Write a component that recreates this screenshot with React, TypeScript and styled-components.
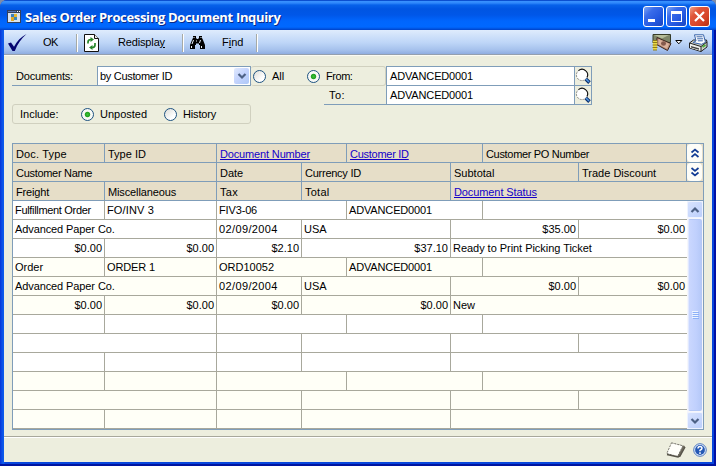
import React from "react";
import styled, { createGlobalStyle, css } from "styled-components";

const GlobalStyle = createGlobalStyle`
  * { box-sizing: border-box; }
  body { margin: 0; background: #7f8da8; }
  svg { display: block; flex: none; }
`;

const line = "#7f9db9";
const face = "#edeede";

const Window = styled.div`
  width: 716px;
  height: 466px;
  display: flex;
  flex-direction: column;
  overflow: hidden;
  border-radius: 7px 7px 0 0;
  background: #0846dc;
  font: 11px/13px "Liberation Sans", Arial, sans-serif;
  color: #000;
  white-space: nowrap;
`;

const TitleBar = styled.header`
  height: 30px;
  flex: none;
  display: flex;
  align-items: center;
  padding: 3px 6px 0 7px;
  background: linear-gradient(
    #0b4fd0 0, #0b4fd0 1px, #3a93ff 1px, #2f88fb 3px, #0762ea 5px, #0055e2 9px,
    #0057e8 15px, #0066fd 21px, #0068ff 27px, #0050dc 29px, #0040c4 30px
  );
`;

const Title = styled.h1`
  margin: 0 auto 0 4px;
  font: bold 13px/18px "Open Sans", sans-serif;
  letter-spacing: -0.33px;
  color: #fff;
  text-shadow: 1px 1px 0 #0a2a86;
`;

const CaptionButton = styled.button<{ $close?: boolean }>`
  width: 21px;
  height: 21px;
  margin: 0 0 0 2px;
  padding: 0;
  border: 1px solid #fff;
  border-radius: 3px;
  background: ${(p) =>
    p.$close
      ? "linear-gradient(135deg, #f0a088 0, #e0563a 30%, #d8452a 65%, #b83010 100%)"
      : "linear-gradient(135deg, #7ea6f4 0, #3a6cea 30%, #2458e0 65%, #1a44c0 100%)"};
`;

const Frame = styled.div`
  flex: 1;
  min-height: 0;
  display: flex;
  flex-direction: column;
  padding: 0 0 0 4px;
  border-right: 2px solid #0010a4;
  border-bottom: 2px solid #0014a0;
  background: linear-gradient(90deg, #0734d8 0, #0c50e6 2px, #0d5eee 4px, #0846dc 5px);
`;

const Client = styled.main`
  flex: 1;
  min-height: 0;
  margin: 0 2px 2px 0;
  display: flex;
  flex-direction: column;
  background: ${face};
`;

const Toolbar = styled.div`
  height: 26px;
  flex: none;
  display: flex;
  align-items: center;
  padding: 0 4px 1px 4px;
  background: linear-gradient(#dfecfd 0, #cfe1fa 6px, #bdd5f7 13px, #a5c1ec 20px, #8fade0 24px, #8c9ab0 24px, #9da5ac 25px, #fbfbf4 25px);
`;

const Tool = styled.button<{ $width: number; $gap: number; $ls?: number }>`
  width: ${(p) => p.$width}px;
  height: 22px;
  padding: 0;
  border: 0;
  background: none;
  display: flex;
  align-items: center;
  gap: ${(p) => p.$gap}px;
  font: inherit;
  letter-spacing: ${(p) => p.$ls ?? 0}px;
  color: #000;
`;

const Divider = styled.i`
  width: 2px;
  height: 18px;
  margin-right: 6px;
  border-left: 1px solid #a6aaa6;
  border-right: 1px solid #fff;
`;

const ToolEnd = styled.div`
  margin-left: auto;
  display: flex;
  align-items: center;
`;

const Form = styled.section`
  display: flex;
  align-items: flex-start;
  margin: 10px 0 0 8px;
  height: 77px;
`;

const LeftForm = styled.div`
  width: 239px;
`;

const Row = styled.div`
  display: flex;
`;

const Prompt = styled.label<{ $width: number; $height: number; $pad: number; $ls?: number }>`
  width: ${(p) => p.$width}px;
  height: ${(p) => p.$height}px;
  padding: ${(p) => p.$height - 16}px 0 0 ${(p) => p.$pad}px;
  letter-spacing: ${(p) => p.$ls ?? 0}px;
  border-bottom: 1px solid ${line};
`;

const Combo = styled.div`
  flex: 1;
  height: 20px;
  display: flex;
  justify-content: space-between;
  border: 1px solid ${line};
  background: #fff;
  padding: 1px 1px 1px 2px;
  line-height: 17px;
  letter-spacing: -0.31px;
`;

const ComboArrow = styled.span`
  width: 15px;
  height: 16px;
  display: grid;
  place-items: center;
  border-radius: 2px;
  background: linear-gradient(135deg, #e1eafe, #c3d3fd 50%, #aec8f7);
`;

const Group = styled.div<{ $kind: "range" | "include" }>`
  display: flex;
  align-items: center;
  height: 20px;
  border: 1px solid #d0d0bf;
  border-radius: 3px;
  ${(p) =>
    p.$kind === "range"
      ? css`width: 135px; padding-left: 2px; border-left: 0;`
      : css`width: 239px; margin-top: 18px; padding-left: 7px;`}
`;

const Option = styled.label<{ $width: number; $gap: number; $ls?: number }>`
  width: ${(p) => p.$width}px;
  display: flex;
  align-items: center;
  gap: ${(p) => p.$gap}px;
  letter-spacing: ${(p) => p.$ls ?? 0}px;
`;

const Radio = styled.span<{ $on?: boolean }>`
  width: 13px;
  height: 13px;
  border: 1px solid #1d5281;
  border-radius: 50%;
  background: ${(p) =>
    p.$on
      ? "radial-gradient(circle at 5.5px 5.5px, #3fc43c 0, #21a121 2.2px, #f8f9f6 3.2px)"
      : "linear-gradient(135deg, #dcdcd7, #fff 70%)"};
`;

const IncludeText = styled.span`
  width: 61px;
  padding-top: 1px;
`;

const RangeForm = styled.div`
  display: flex;
  flex-direction: column;
  align-items: flex-end;
`;

const LookupFields = styled.div`
  width: 206px;
  border: 1px solid ${line};
`;

const LookupRow = styled.div`
  height: 19px;
  display: flex;
  & + & { height: 18px; }
  &:first-child { border-bottom: 1px solid ${line}; }
`;

const LookupValue = styled.span`
  width: 188px;
  padding: 3px 0 0 3px;
  background: #fff;
  border-right: 1px solid ${line};
  letter-spacing: -0.15px;
`;

const Grid = styled.section`
  width: 692px;
  height: 287px;
  flex: none;
  margin-left: 8px;
  border: 1px solid ${line};
`;

const GridHead = styled.div`
  background: #e6dec8;
`;

const GridBody = styled.div`
  display: flex;
`;

const Records = styled.div`
  width: 674px;
`;

const GridRow = styled.div<{ $head?: boolean; $tint?: boolean }>`
  height: 19px;
  display: flex;
  border-bottom: 1px solid ${(p) => (p.$head ? line : "#a8a89c")};
  background: ${(p) => (p.$head ? "#e6dec8" : p.$tint ? "#fffff7" : "#fff")};
`;

const Cell = styled.span<{ $width: number; $head?: boolean; $right?: boolean; $ls?: number; $last?: boolean }>`
  width: ${(p) => p.$width}px;
  flex: none;
  padding: ${(p) => (p.$head ? "4px 2px 0 3px" : "3px 2px 0 2px")};
  border-right: ${(p) => (p.$last ? 0 : 1)}px solid ${(p) => (p.$head ? line : "#a8a89c")};
  text-align: ${(p) => (p.$right ? "right" : "left")};
  letter-spacing: ${(p) => p.$ls ?? 0}px;
`;

const HeadLink = styled.a`
  color: #1400c8;
  text-decoration: underline;
  text-underline-offset: 1px;
`;

const Expander = styled.span`
  width: 15px;
  display: grid;
  place-items: center;
  border-radius: 4px;
  background: #fdfdf8;
`;

const Scrollbar = styled.div`
  width: 16px;
  display: flex;
  flex-direction: column;
  background: #f6f6fb;
`;

const ScrollEnd = styled.span`
  height: 17px;
  display: grid;
  place-items: center;
  border: 1px solid #eef3ff;
  border-radius: 2px;
  background: linear-gradient(135deg, #d8e3fe, #bccffb);
`;

const Thumb = styled.span`
  flex: 1;
  margin: 1px;
  display: flex;
  align-items: center;
  justify-content: center;
  border: 1px solid #b4c8f6;
  border-left-color: #dfe8ff;
  border-radius: 2px;
  background: linear-gradient(90deg, #cad7fe, #c0d0fd 60%, #b6c9f8);
`;

const StatusBar = styled.footer`
  flex: 1;
  margin-top: 6px;
  display: flex;
  align-items: center;
  justify-content: flex-end;
  gap: 7px;
  padding-right: 5px;
  border-top: 1px solid #a8a89c;
  box-shadow: inset 0 1px #fff;
`;

const Chevron = () => (
  <svg width="10" height="8" viewBox="0 0 10 8"><path d="M1.5 2 5 5.5 8.5 2" fill="none" stroke="#4d6185" strokeWidth="2.2" /></svg>
);
const ChevronUp = () => (
  <svg width="10" height="8" viewBox="0 0 10 8"><path d="M1.5 6 5 2.5 8.5 6" fill="none" stroke="#4d6185" strokeWidth="2.2" /></svg>
);
const DoubleChevron = ({ up }: { up?: boolean }) => (
  <svg width="10" height="10" viewBox="0 0 10 10">
    <path d={up ? "M1.5 4.5 5 1.5 8.5 4.5M1.5 9 5 6 8.5 9" : "M1.5 1 5 4 8.5 1M1.5 5.5 5 8.5 8.5 5.5"} fill="none" stroke="#123c94" strokeWidth="1.7" />
  </svg>
);

const AppIcon = () => (
  <svg width="14" height="13" viewBox="0 0 14 13" shapeRendering="crispEdges">
    <rect width="14" height="13" fill="#34415c" /><rect x="1" y="3" width="12" height="9" fill="#d9e2ee" />
    <path d="M1 1h8v1H1z" fill="#5c78b4" /><path d="M10 1h1v1h-1zM12 1h1v1h-1z" fill="#fff" />
    <path d="M4 4h3v3H4z" fill="#3a80c0" /><path d="M7 4h3v3H7z" fill="#e8b830" /><path d="M4 7h3v4H4z" fill="#e0a828" /><path d="M7 7h3v3H7z" fill="#3c88b8" />
  </svg>
);
const CheckIcon = () => (
  <svg width="19" height="18" viewBox="0 0 19 18"><path d="M0 9.500 3 8.500 6 12.800C9 7 13 3 18.500 0 13 5 9.500 10 6.800 17H4.500Z" fill="#050570" /></svg>
);
const RefreshIcon = () => (
  <svg width="15" height="18" viewBox="0 0 15 18">
    <path d="M.5.5h10l4 4v13H.5z" fill="#fff" stroke="#111" /><path d="M10.500.5v4h4" fill="#e8e8e8" stroke="#111" />
    <path d="M4 9.500V8q0-2.500 3-2.500M11 9v2q0 2.500-3 2.500" fill="none" stroke="#27862a" strokeWidth="1.7" />
    <path d="m6.500 3 3.500 2.500L6.500 8zM8.500 11 5 13.500 8.500 16z" fill="#27862a" />
  </svg>
);
const BinocularsIcon = () => (
  <svg width="15" height="14" viewBox="0 0 15 14">
    <path d="M3 0h3v2l1 1h1l1-1V0h3v2l1 2 2 5v4h-5V9H9V7.500H6V9H5v4H0V9l2-5 1-2z" fill="#000" />
    <path d="M4 1v1M11 1v1M3.500 4 2 8M10.500 4l-1 3M1.500 10v2M11.500 10v2M6.500 4.500v1" stroke="#e8f0fa" fill="none" />
  </svg>
);
const CashIcon = () => (
  <svg width="20" height="18" viewBox="0 0 20 18">
    <path d="M1 .5h17.500v8H1z" fill="#7e8668" stroke="#343b28" /><path d="M2 1h15L10 4.500z" fill="#b5bc98" />
    <path d="m5 3.500 14 6-3.500 7-11-6z" fill="#b68a73" stroke="#3c2620" /><path d="m6.500 5 10.500 4.800-2 5-8.500-4.500z" fill="#dcb29c" />
    <ellipse cx="11.500" cy="9.500" rx="2.500" ry="2.200" fill="#85594c" />
    <path d="M1 7h4v9H1z" fill="#ecd94a" /><path d="M.5 8.500h5M.5 11h5M.5 13.500h5M1 16h4M1 6.500h4" stroke="#8c7c18" />
  </svg>
);
const CaretIcon = () => (
  <svg width="8" height="5" viewBox="0 0 8 5"><path d="M.8.5h6L3.800 3.800z" fill="#fff" stroke="#000" /></svg>
);
const PrinterIcon = () => (
  <svg width="19" height="18" viewBox="0 0 19 18">
    <path d="m.5 9 4-3 13 0 .5 2v5l-6 4.500L.5 14z" fill="#cfd2cb" stroke="#222" />
    <path d="m5.500.8 9 0 2 7.500-4 2L4 8.500 7 7z" fill="#fff" stroke="#3863a8" /><path d="M7.500 2.800h6M8.200 4.800h6M8.800 6.800h5" stroke="#3863a8" />
    <path d="m1 9.500 11 3v4.500L1 13.800z" fill="#edeeea" /><path d="m.5 9 11.500 3.500L18 8M12 12.500v5" fill="none" stroke="#222" />
    <path d="m2 12 8 2.200v1.500L2 13.500z" fill="#444" /><path d="m13.500 13 3-2" stroke="#4fae39" strokeWidth="2" />
  </svg>
);
const LookupIcon = () => (
  <svg width="16" height="18" viewBox="0 0 16 18">
    <circle cx="7" cy="8" r="5.600" fill="#fff" stroke="#8b8b86" strokeDasharray="2 1" />
    <path d="M3.500 3.600A5.600 5.600 0 0 1 12 10.500" fill="none" stroke="#111" strokeWidth="1.100" />
    <path d="m10.800 12 3.700 3.600" stroke="#0c2f6c" strokeWidth="3.600" /><path d="m11 12 3 3" stroke="#4f93e0" strokeWidth="1.600" />
  </svg>
);
const NoteIcon = () => (
  <svg width="20" height="16" viewBox="0 0 20 16">
    <path d="m6 1 13 3-5 11-3-.5z" fill="#6e6a5c" /><path d="m5.500.8 11.500 3L11.500 14.500.8 11.500z" fill="#fffffb" stroke="#77766d" strokeDasharray="2 1" />
    <path d="M1 12.500 12 15l2-1 5-9" fill="none" stroke="#57544a" strokeWidth="1.500" />
  </svg>
);
const HelpIcon = () => (
  <svg width="14" height="14" viewBox="0 0 14 14">
    <circle cx="7" cy="7" r="6.300" fill="#e8f1ff" stroke="#4f78bd" /><circle cx="7" cy="7" r="4.900" fill="#2458b4" />
    <path d="M5 5.500Q5 3.500 7 3.500T9 5.300Q9 6.300 7 7.300V8.300" fill="none" stroke="#fff" strokeWidth="1.500" /><rect x="6.200" y="9.300" width="1.600" height="1.600" fill="#fff" />
  </svg>
);

type Col = { text?: string; ls?: number; link?: boolean; right?: boolean };
const widths = [
  [92, 112, 130, 136, 204],
  [204, 85, 149, 128, 108],
  [92, 112, 85, 149, 236],
];

const headings: Col[][] = [
  [{ text: "Doc. Type", ls: 0.15 }, { text: "Type ID" }, { text: "Document Number", ls: -0.15, link: true }, { text: "Customer ID", ls: -0.27, link: true }, { text: "Customer PO Number", ls: -0.32 }],
  [{ text: "Customer Name", ls: -0.3 }, { text: "Date" }, { text: "Currency ID", ls: -0.25 }, { text: "Subtotal" }, { text: "Trade Discount" }],
  [{ text: "Freight", ls: -0.17 }, { text: "Miscellaneous", ls: -0.13 }, { text: "Tax", ls: 0.3 }, { text: "Total", ls: 0.25 }, { text: "Document Status", ls: -0.1, link: true }],
];

const money = (text: string): Col => ({ text, right: true });
const record = (type: Col, id: Col, num: Col, sub: string, tax: string, total: string, status: Col): Col[][] => [
  [type, id, num, { text: "ADVANCED0001", ls: -0.15 }, {}],
  [{ text: "Advanced Paper Co.", ls: -0.1 }, { text: "02/09/2004", ls: 0.38 }, { text: "USA" }, money(sub), money("$0.00")],
  [money("$0.00"), money("$0.00"), money(tax), money(total), status],
];
const blank: Col[][] = widths.map((w) => w.map(() => ({})));

const records: Col[][][] = [
  record({ text: "Fulfillment Order", ls: -0.32 }, { text: "FO/INV 3", ls: 0.15 }, { text: "FIV3-06", ls: -0.15 }, "$35.00", "$2.10", "$37.10", { text: "Ready to Print Picking Ticket", ls: -0.04 }),
  record({ text: "Order" }, { text: "ORDER 1", ls: -0.13 }, { text: "ORD10052" }, "$0.00", "$0.00", "$0.00", { text: "New" }),
  blank,
  blank,
];

export default function App() {
  return (
    <>
      <GlobalStyle />
      <Window>
        <TitleBar>
          <AppIcon />
          <Title>Sales Order Processing Document Inquiry</Title>
          <CaptionButton aria-label="Minimize">
            <svg width="19" height="19"><path d="M4 12h7v3H4z" fill="#fff" /></svg>
          </CaptionButton>
          <CaptionButton aria-label="Maximize">
            <svg width="19" height="19"><path d="M4 4h11v11H4zM5 7v7h9V7z" fill="#fff" fillRule="evenodd" /></svg>
          </CaptionButton>
          <CaptionButton $close aria-label="Close">
            <svg width="19" height="19"><path d="m5 5 9 9m0-9-9 9" stroke="#fff" strokeWidth="2.200" /></svg>
          </CaptionButton>
        </TitleBar>
        <Frame>
          <Client>
            <Toolbar>
              <Tool $width={68} $gap={16} $ls={-0.5}><CheckIcon />OK</Tool>
              <Divider />
              <Tool $width={98} $gap={19} $ls={-0.15}><RefreshIcon /><span>Redispla<u>y</u></span></Tool>
              <Divider />
              <Tool $width={66} $gap={17}><BinocularsIcon /><span>F<u>i</u>nd</span></Tool>
              <Divider />
              <ToolEnd>
                <Tool $width={37} $gap={3}><CashIcon /><CaretIcon /></Tool>
                <PrinterIcon />
              </ToolEnd>
            </Toolbar>
            <Form>
              <LeftForm>
                <Row>
                  <Prompt $width={85} $height={20} $pad={4} $ls={-0.17}>Documents:</Prompt>
                  <Combo>by Customer ID<ComboArrow><Chevron /></ComboArrow></Combo>
                </Row>
                <Group $kind="include">
                  <IncludeText>Include:</IncludeText>
                  <Option $width={83} $gap={6}><Radio $on />Unposted</Option>
                  <Option $width={70} $gap={6} $ls={-0.17}><Radio />History</Option>
                </Group>
              </LeftForm>
              <RangeForm>
                <Group $kind="range">
                  <Option $width={54} $gap={6}><Radio />All</Option>
                  <Option $width={60} $gap={6} $ls={-0.45}><Radio $on />From:</Option>
                </Group>
                <Prompt $width={62} $height={19} $pad={5} $ls={0.4}>To:</Prompt>
              </RangeForm>
              <LookupFields>
                <LookupRow><LookupValue>ADVANCED0001</LookupValue><LookupIcon /></LookupRow>
                <LookupRow><LookupValue>ADVANCED0001</LookupValue><LookupIcon /></LookupRow>
              </LookupFields>
            </Form>
            <Grid>
              <GridHead>
                {headings.map((cols, r) => (
                  <GridRow key={r} $head>
                    {cols.map((c, i) => (
                      <Cell key={i} $head $width={r === 2 && i === 4 ? 252 : widths[r][i]} $ls={c.ls} $last={r === 2 && i === 4}>
                        {c.link ? <HeadLink>{c.text}</HeadLink> : c.text}
                      </Cell>
                    ))}
                    {r < 2 && <Expander><DoubleChevron up={r === 0} /></Expander>}
                  </GridRow>
                ))}
              </GridHead>
              <GridBody>
                <Records>
                  {records.map((rec, n) =>
                    rec.map((cols, r) => (
                      <GridRow key={`${n}-${r}`} $tint={n % 2 === 1}>
                        {cols.map((c, i) => (
                          <Cell key={i} $width={widths[r][i]} $ls={c.ls} $right={c.right} $last={i === 4}>{c.text}</Cell>
                        ))}
                      </GridRow>
                    )),
                  )}
                </Records>
                <Scrollbar>
                  <ScrollEnd><ChevronUp /></ScrollEnd>
                  <Thumb>
                    <svg width="7" height="8"><path d="M0 .5h6M0 2.500h6M0 4.500h6M0 6.500h6" stroke="#eef4fe" /><path d="M1 1.500h6M1 3.500h6M1 5.500h6M1 7.500h6" stroke="#8cb0f8" /></svg>
                  </Thumb>
                  <ScrollEnd><Chevron /></ScrollEnd>
                </Scrollbar>
              </GridBody>
            </Grid>
            <StatusBar><NoteIcon /><HelpIcon /></StatusBar>
          </Client>
        </Frame>
      </Window>
    </>
  );
}
